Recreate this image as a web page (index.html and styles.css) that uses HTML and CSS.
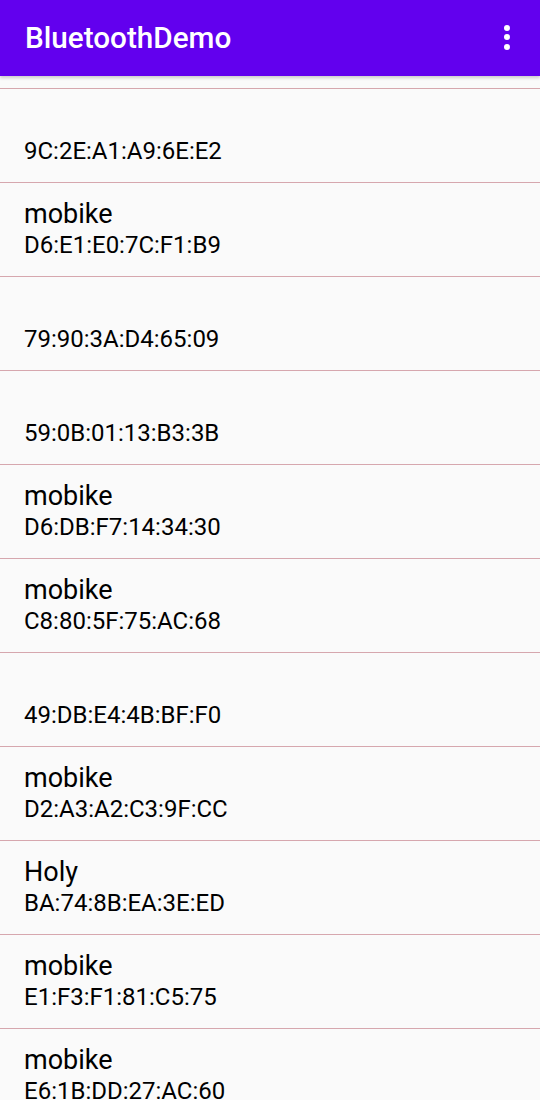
FILE: index.html
```html
<!DOCTYPE html>
<html>
<head>
<meta charset="utf-8">
<link rel="stylesheet" href="styles.css">
</head>
<body>
<div class="screen">
  <header class="appbar">
    <div class="title">BluetoothDemo</div>
    <div class="overflow"><span></span><span></span><span></span></div>
  </header>
  <div class="viewport">
    <ul class="list">
      <li class="row row-partial"></li>
      <li class="row"><div class="name">&nbsp;</div><div class="addr">9C:2E:A1:A9:6E:E2</div></li>
      <li class="row"><div class="name">mobike</div><div class="addr">D6:E1:E0:7C:F1:B9</div></li>
      <li class="row"><div class="name">&nbsp;</div><div class="addr">79:90:3A:D4:65:09</div></li>
      <li class="row"><div class="name">&nbsp;</div><div class="addr">59:0B:01:13:B3:3B</div></li>
      <li class="row"><div class="name">mobike</div><div class="addr">D6:DB:F7:14:34:30</div></li>
      <li class="row"><div class="name">mobike</div><div class="addr">C8:80:5F:75:AC:68</div></li>
      <li class="row"><div class="name">&nbsp;</div><div class="addr">49:DB:E4:4B:BF:F0</div></li>
      <li class="row"><div class="name">mobike</div><div class="addr">D2:A3:A2:C3:9F:CC</div></li>
      <li class="row"><div class="name">Holy</div><div class="addr">BA:74:8B:EA:3E:ED</div></li>
      <li class="row"><div class="name">mobike</div><div class="addr">E1:F3:F1:81:C5:75</div></li>
      <li class="row"><div class="name">mobike</div><div class="addr">E6:1B:DD:27:AC:60</div></li>
    </ul>
  </div>
</div>
</body>
</html>
```
FILE: styles.css
```css
html, body {
  margin: 0;
  padding: 0;
  background: #fafafa;
}
.screen {
  width: 540px;
  height: 1100px;
  display: flex;
  flex-direction: column;
  overflow: hidden;
  font-family: Roboto, "Noto Sans", sans-serif;
}
.appbar {
  height: 76px;
  flex: none;
  background: #6200ee;
  display: flex;
  align-items: center;
  justify-content: space-between;
  padding: 0 0 2px 25px;
  box-sizing: border-box;
  box-shadow: 0 2px 3px rgba(0,0,0,0.18);
  position: relative;
  z-index: 1;
}
.title {
  color: #ffffff;
  font-size: 29.7px;
  font-weight: 500;
  line-height: 35px;
}
.overflow {
  width: 66px;
  display: flex;
  flex-direction: column;
  align-items: center;
  gap: 3.5px;
  padding-left: 1px;
}
.overflow span {
  width: 6px;
  height: 6px;
  border-radius: 50%;
  background: #ffffff;
}
.viewport {
  flex: 1;
  overflow: hidden;
}
.list {
  list-style: none;
  margin: -81px 0 0 0;
  padding: 0;
}
.row {
  height: 78px;
  border-bottom: 1px solid #d6a7ae;
  padding: 15px 24px 0 24px;
  box-sizing: content-box;
  color: #000000;
}
.name {
  font-size: 27px;
  line-height: 32px;
}
.addr {
  margin-top: 1px;
  font-size: 24px;
  line-height: 28px;
}
```
